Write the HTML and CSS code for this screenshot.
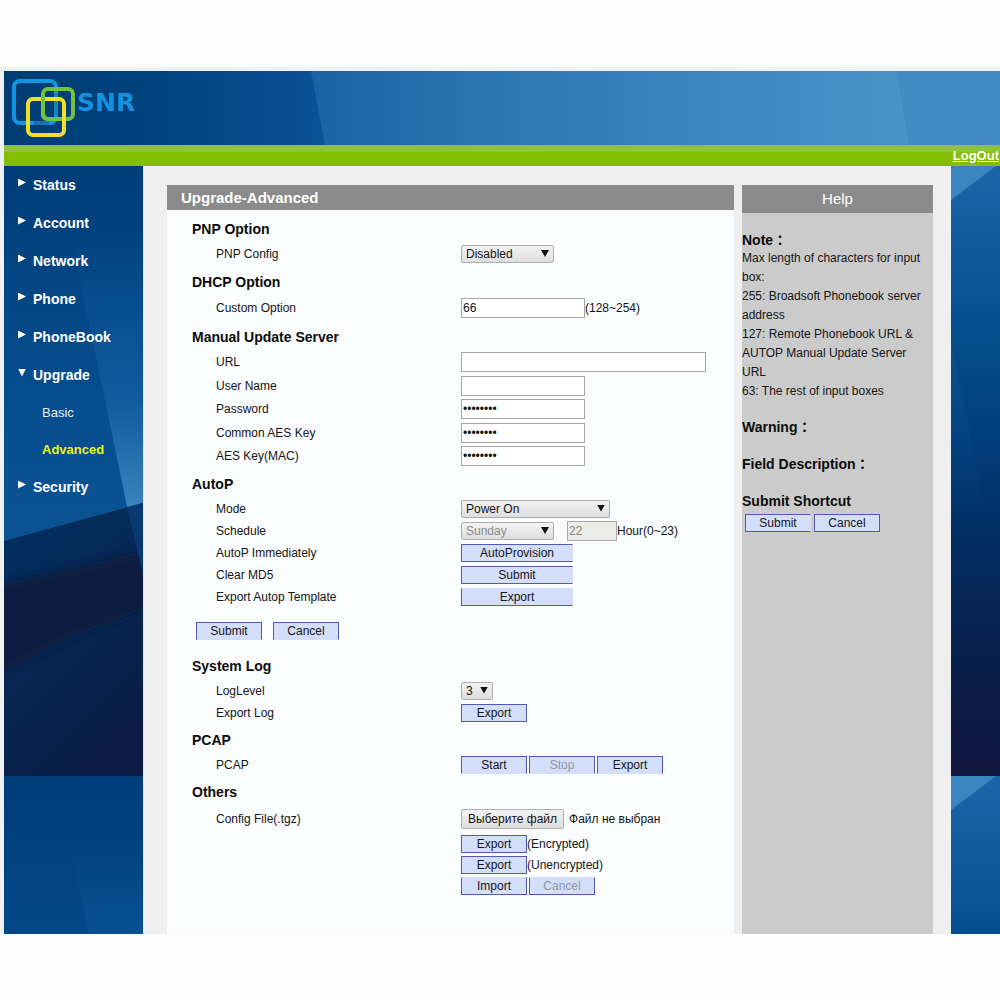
FILE: index.html
```html
<!DOCTYPE html>
<html lang="en">
<head>
<meta charset="utf-8">
<title>Upgrade-Advanced</title>
<link rel="stylesheet" href="styles.css">
</head>
<body>
<div class="app">
  <header class="banner">
    <svg class="logo" width="132" height="62" viewBox="0 0 132 62" role="img" aria-label="SNR">
      <g fill="none" stroke-width="4">
        <rect x="4" y="4" width="42" height="42" rx="6" stroke="#1296e2"/>
        <rect x="33" y="12" width="30" height="30" rx="5" stroke="#72c240"/>
        <path d="M46 16V38" stroke="#1b83b4"/>
        <path d="M24 46H39" stroke="#1a6fb5"/>
        <rect x="18" y="22" width="36" height="36" rx="5" stroke="#f0e02c"/>
        <path d="M33 20V36Q33 42 38 42H49" stroke="#72c240"/>
      </g>
      <text class="logo-text" x="67" y="34">SNR</text>
    </svg>
  </header>
  <div class="topbar"><a class="logout" href="#">LogOut</a></div>
  <div class="workspace">
    <nav class="sidebar">
      <ul class="menu">
        <li><a href="#" class="menu-item">Status</a></li>
        <li><a href="#" class="menu-item">Account</a></li>
        <li><a href="#" class="menu-item">Network</a></li>
        <li><a href="#" class="menu-item">Phone</a></li>
        <li><a href="#" class="menu-item">PhoneBook</a></li>
        <li><a href="#" class="menu-item menu-item-open">Upgrade</a>
          <ul class="submenu">
            <li><a href="#" class="submenu-item">Basic</a></li>
            <li><a href="#" class="submenu-item submenu-current">Advanced</a></li>
          </ul>
        </li>
        <li><a href="#" class="menu-item">Security</a></li>
      </ul>
    </nav>
    <main class="content">
      <form class="panel">
        <h1 class="panel-title">Upgrade-Advanced</h1>
        <div class="panel-body">
          <section class="group">
            <h2>PNP Option</h2>
            <div class="row"><label for="pnp">PNP Config</label>
              <div class="control"><span class="picker picker-medium"><select id="pnp"><option>Disabled</option></select></span></div></div>
          </section>
          <section class="group">
            <h2>DHCP Option</h2>
            <div class="row row-tall"><label for="custom">Custom Option</label>
              <div class="control"><input id="custom" class="text" type="text" value="66"><span>(128~254)</span></div></div>
          </section>
          <section class="group">
            <h2>Manual Update Server</h2>
            <div class="row"><label for="url">URL</label>
              <div class="control"><input id="url" class="text text-wide" type="text"></div></div>
            <div class="row row-snug"><label for="user">User Name</label>
              <div class="control"><input id="user" class="text" type="text"></div></div>
            <div class="row"><label for="pass">Password</label>
              <div class="control"><input id="pass" class="text" type="password" value="password"></div></div>
            <div class="row row-snug"><label for="aes">Common AES Key</label>
              <div class="control"><input id="aes" class="text" type="password" value="password"></div></div>
            <div class="row"><label for="aesmac">AES Key(MAC)</label>
              <div class="control"><input id="aesmac" class="text" type="password" value="password"></div></div>
          </section>
          <section class="group">
            <h2>AutoP</h2>
            <div class="row row-snug"><label for="mode">Mode</label>
              <div class="control"><span class="picker picker-wide"><select id="mode"><option>Power On</option></select></span></div></div>
            <div class="row row-tight"><label for="day">Schedule</label>
              <div class="control"><span class="picker picker-medium"><select id="day" disabled><option>Sunday</option></select></span>
                <input id="hour" class="text text-hour" type="text" value="22" disabled><label for="hour">Hour(0~23)</label></div></div>
            <div class="row row-tight"><span>AutoP Immediately</span>
              <div class="control"><button type="button" class="btn btn-wide open-right">AutoProvision</button></div></div>
            <div class="row row-tight"><span>Clear MD5</span>
              <div class="control"><button type="button" class="btn btn-wide open-right">Submit</button></div></div>
            <div class="row row-tight"><span>Export Autop Template</span>
              <div class="control"><button type="button" class="btn btn-wide open-right open-top">Export</button></div></div>
          </section>
          <div class="actions">
            <button type="button" class="btn open-bottom">Submit</button>
            <button type="button" class="btn open-bottom">Cancel</button>
          </div>
          <section class="group">
            <h2>System Log</h2>
            <div class="row row-snug"><label for="level">LogLevel</label>
              <div class="control"><span class="picker picker-small"><select id="level"><option>3</option></select></span></div></div>
            <div class="row row-tight"><span>Export Log</span>
              <div class="control"><button type="button" class="btn">Export</button></div></div>
          </section>
          <section class="group">
            <h2>PCAP</h2>
            <div class="row row-snug"><span>PCAP</span>
              <div class="control control-buttons"><button type="button" class="btn open-bottom">Start</button><button type="button" class="btn open-bottom" disabled>Stop</button><button type="button" class="btn open-bottom">Export</button></div></div>
          </section>
          <section class="group">
            <h2>Others</h2>
            <div class="row row-file"><label for="config">Config File(.tgz)</label>
              <div class="control"><input id="config" class="file-input" type="file"><label for="config" class="file-button">Выберите файл</label><span>Файл не выбран</span></div></div>
            <div class="row row-compact"><span></span>
              <div class="control"><button type="button" class="btn">Export</button><span>(Encrypted)</span></div></div>
            <div class="row row-compact"><span></span>
              <div class="control"><button type="button" class="btn">Export</button><span>(Unencrypted)</span></div></div>
            <div class="row row-compact"><span></span>
              <div class="control control-buttons"><button type="button" class="btn open-top">Import</button><button type="button" class="btn open-top" disabled>Cancel</button></div></div>
          </section>
        </div>
      </form>
      <aside class="help">
        <h2 class="help-title">Help</h2>
        <div class="help-body">
          <h3>Note：</h3>
          <p>Max length of characters for input box:</p>
          <p>255: Broadsoft Phonebook server address</p>
          <p>127: Remote Phonebook URL &amp; AUTOP Manual Update Server URL</p>
          <p>63: The rest of input boxes</p>
          <h3>Warning：</h3>
          <h3>Field Description：</h3>
          <h3>Submit Shortcut</h3>
          <div class="help-actions">
            <button type="button" class="btn open-right">Submit</button>
            <button type="button" class="btn">Cancel</button>
          </div>
        </div>
      </aside>
    </main>
    <div class="edge"></div>
  </div>
</div>
</body>
</html>
```

FILE: styles.css
```css
* {
  box-sizing: border-box;
}

body {
  margin: 0;
  padding: 67px 0 66px;
  background: #fefefe;
  color: #151515;
  font: 12px/18px "Liberation Sans", Arial, "Noto Sans CJK JP", sans-serif;
}

h1, h2, h3, p, ul {
  margin: 0;
  padding: 0;
}

ul {
  list-style: none;
}

.app {
  padding: 4px 0 0 4px;
  background: #f0f1f3;
}

/* Header */

.banner {
  height: 74px;
  padding: 6px 6px 0;
  background: #1c65a5 url("data:image/svg+xml,%3Csvg xmlns='http://www.w3.org/2000/svg' viewBox='0 0 996 74' preserveAspectRatio='none'%3E%3Cdefs%3E%3ClinearGradient id='a'%3E%3Cstop offset='0' stop-color='%23003c72'/%3E%3Cstop offset='.5' stop-color='%23004481'/%3E%3Cstop offset='1' stop-color='%230d5295'/%3E%3C/linearGradient%3E%3ClinearGradient id='b'%3E%3Cstop offset='0' stop-color='%231a62a3'/%3E%3Cstop offset='.25' stop-color='%232b75b1'/%3E%3Cstop offset='.6' stop-color='%234086c1'/%3E%3Cstop offset='1' stop-color='%235098cb'/%3E%3C/linearGradient%3E%3C/defs%3E%3Cpath fill='url(%23a)' d='M0 0h330v74H0z'/%3E%3Cpath fill='url(%23b)' d='M307 0h689v74H321z'/%3E%3Cpath fill='%23438bc2' d='M893 0h103v74h-91z'/%3E%3C/svg%3E") 0 0 / 100% 100% no-repeat;
}

.logo {
  display: block;
}

.logo-text {
  fill: #1590df;
  font: bold 25px "DejaVu Sans", sans-serif;
}

.topbar {
  display: flex;
  justify-content: flex-end;
  height: 21px;
  padding-right: 1px;
  background: linear-gradient(#8ac046, #93c340 6px, #84be00 8px);
}

.logout {
  color: #fff;
  font-size: 13px;
  font-weight: bold;
  line-height: 22px;
}

.workspace {
  display: flex;
  min-height: 768px;
}

/* Menu */

.sidebar {
  flex: 0 0 140px;
  border-right: 1px solid #dde6ef;
  background: #04427d url("data:image/svg+xml,%3Csvg xmlns='http://www.w3.org/2000/svg' width='139' height='610'%3E%3Cdefs%3E%3ClinearGradient id='a' x2='0' y2='1'%3E%3Cstop offset='0' stop-color='%23003d78'/%3E%3Cstop offset='.6' stop-color='%23074d8e'/%3E%3Cstop offset='1' stop-color='%230c5394'/%3E%3C/linearGradient%3E%3ClinearGradient id='b' x2='0' y2='1'%3E%3Cstop offset='0' stop-color='%23064888' stop-opacity='0'/%3E%3Cstop offset='.25' stop-color='%23084e8e'/%3E%3Cstop offset='.6' stop-color='%23125b9c'/%3E%3Cstop offset='1' stop-color='%233b84bf'/%3E%3C/linearGradient%3E%3ClinearGradient id='c' x2='.5' y2='1'%3E%3Cstop offset='0' stop-color='%23032f63'/%3E%3Cstop offset='.55' stop-color='%23062852'/%3E%3Cstop offset='1' stop-color='%230a1c47'/%3E%3C/linearGradient%3E%3Cfilter id='f' x='-20%25' width='140%25' y='-20%25' height='140%25'%3E%3CfeGaussianBlur stdDeviation='4'/%3E%3C/filter%3E%3C/defs%3E%3Cpath fill='url(%23a)' d='M0 0h139v380H0z'/%3E%3Cpath fill='url(%23b)' d='M68 70H139V345H124L75 109z'/%3E%3Cpath fill='url(%23c)' d='M0 375L139 337V610H0z'/%3E%3Cpath fill='%230d1b40' filter='url(%23f)' d='M-20 423L160 380V435L70 470L-20 518z'/%3E%3Cpath fill='%23073a70' d='M123 341L139 337V408z'/%3E%3C/svg%3E") repeat-y;
}

.menu-item {
  display: flex;
  align-items: center;
  height: 38px;
  padding-left: 14px;
  color: #fff;
  font-size: 14px;
  font-weight: bold;
  text-decoration: none;
}

.menu-item::before {
  content: "";
  width: 8px;
  height: 8px;
  margin: 0 7px 5px 0;
  background: #fff;
  clip-path: polygon(0 0, 100% 50%, 0 100%);
}

.menu-item-open::before {
  clip-path: polygon(0 0, 100% 0, 50% 100%);
}

.submenu-item {
  display: block;
  padding-left: 38px;
  color: #e6eef6;
  font-size: 13px;
  line-height: 37px;
  text-decoration: none;
}

.submenu-current {
  color: #e6f31e;
  font-weight: bold;
}

.edge {
  flex: 0 0 49px;
  background: #04427d url("data:image/svg+xml,%3Csvg xmlns='http://www.w3.org/2000/svg' width='49' height='610'%3E%3Cdefs%3E%3ClinearGradient id='a' x2='0' y2='1'%3E%3Cstop offset='0' stop-color='%231b66a7'/%3E%3Cstop offset='.25' stop-color='%2307508f'/%3E%3Cstop offset='.42' stop-color='%23024180'/%3E%3Cstop offset='.6' stop-color='%23022e63'/%3E%3Cstop offset='.8' stop-color='%2309204c'/%3E%3Cstop offset='1' stop-color='%230f153d'/%3E%3C/linearGradient%3E%3ClinearGradient id='b' x2='0' y2='1'%3E%3Cstop offset='0' stop-color='%23085492'/%3E%3Cstop offset='1' stop-color='%23023a76' stop-opacity='0'/%3E%3C/linearGradient%3E%3C/defs%3E%3Cpath fill='url(%23a)' d='M0 0h49v610H0z'/%3E%3Cpath fill='url(%23b)' d='M0 175L28 310V360H0z'/%3E%3Cpath fill='%233c85bf' d='M0 0h45L0 34z'/%3E%3C/svg%3E") repeat-y;
}

/* Content */

.content {
  display: flex;
  flex: 1;
  gap: 8px;
  padding: 19px 18px 0 23px;
  background: #efefef;
}

.panel {
  display: flex;
  flex: 1;
  flex-direction: column;
}

.panel-title {
  padding-left: 14px;
  background: #8b8b8b;
  color: #fff;
  font-size: 15px;
  line-height: 25px;
}

.panel-body {
  flex: 1;
  padding: 6px 25px 0;
  background: #fafcfd;
}

.group {
  margin-bottom: 3px;
}

.group h2 {
  color: #0c0c0c;
  font-size: 14px;
  line-height: 26px;
}

.row {
  display: grid;
  grid-template-columns: 245px 1fr;
  align-items: center;
  height: 24px;
  padding-left: 24px;
}

.row-tall { height: 26px; }
.row-file { height: 28px; }
.row-snug { height: 23px; }
.row-tight { height: 22px; }
.row-compact { height: 21px; }

.control {
  display: flex;
  align-items: center;
  white-space: nowrap;
}

.control-buttons {
  gap: 2px;
}

.text {
  width: 124px;
  height: 20px;
  padding: 1px;
  border: 1px solid #a6a6a6;
  background: #fff;
  color: #151515;
  font: inherit;
}

.text-wide {
  width: 245px;
}

.text-hour {
  width: 50px;
  margin-left: 13px;
}

.text:disabled {
  background: #ecede8;
  color: #858585;
}

.picker {
  position: relative;
}

.picker::after {
  content: "";
  position: absolute;
  top: 5px;
  right: 5px;
  width: 8px;
  height: 7px;
  background: #111;
  clip-path: polygon(0 0, 100% 0, 50% 100%);
  pointer-events: none;
}

.picker select {
  display: block;
  width: 100%;
  height: 18px;
  padding: 0 4px;
  border: 1px solid #adadad;
  border-radius: 2px;
  appearance: none;
  background: linear-gradient(#f3f3f3, #dedede);
  color: #151515;
  font: inherit;
  line-height: 16px;
}

.picker select:disabled {
  color: #8c8c8c;
  opacity: 1;
}

.picker-small { width: 32px; }
.picker-medium { width: 93px; }
.picker-wide { width: 149px; }

.btn {
  width: 66px;
  height: 18px;
  padding: 0;
  border: 1px solid #5558b4;
  background: #d3defa;
  color: #151520;
  font: inherit;
  line-height: 16px;
}

.btn:disabled {
  color: #8e95a6;
}

.btn-wide { width: 112px; }
.open-top { border-top-color: #d3defa; }
.open-right { border-right-color: #d3defa; }
.open-bottom { border-bottom-color: #d3defa; }

.actions {
  display: flex;
  gap: 11px;
  padding: 11px 4px 13px;
}

.file-input {
  position: absolute;
  width: 1px;
  height: 1px;
  opacity: 0;
}

.file-button {
  height: 20px;
  margin-right: 5px;
  padding: 0 6px;
  border: 1px solid #b0b0b0;
  border-radius: 2px;
  background: linear-gradient(#f3f3f3, #dedede);
}

/* Help */

.help {
  display: flex;
  flex: 0 0 191px;
  flex-direction: column;
}

.help-title {
  background: #8b8b8b;
  color: #fff;
  font-size: 15px;
  font-weight: normal;
  line-height: 28px;
  text-align: center;
}

.help-body {
  flex: 1;
  padding: 19px 6px 0 0;
  background: #cbcbcb;
}

.help-body h3 {
  margin-bottom: 18px;
  color: #0c0c0c;
  font-size: 14px;
  line-height: 19px;
}

.help-body h3:first-child {
  margin-bottom: 0;
  line-height: 17px;
}

.help-body h3:nth-last-child(2) {
  margin-bottom: 0;
}

.help-body p {
  line-height: 19px;
}

.help-body p + h3 {
  margin-top: 17px;
}

.help-actions {
  display: flex;
  gap: 3px;
  padding: 3px;
}
```
